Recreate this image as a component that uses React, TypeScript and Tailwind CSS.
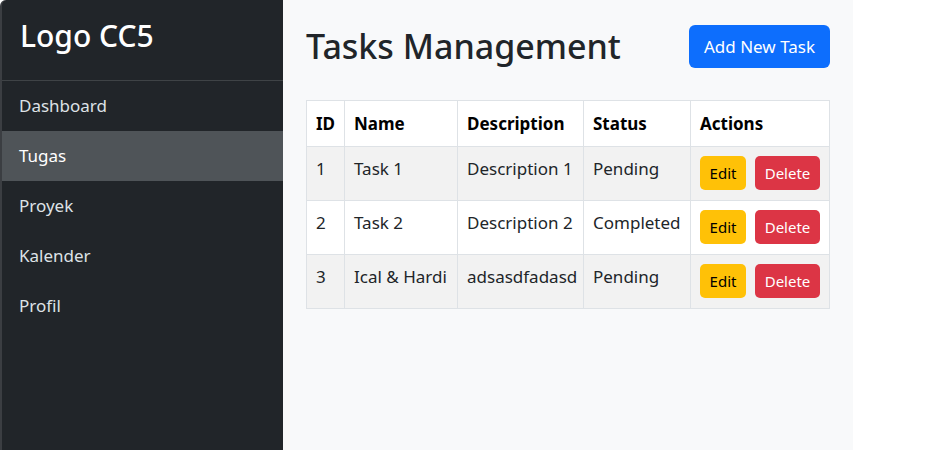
import React from 'react'

const tasks = [
  { id: 1, name: 'Task 1', description: 'Description 1', status: 'Pending' },
  { id: 2, name: 'Task 2', description: 'Description 2', status: 'Completed' },
  { id: 3, name: 'Ical & Hardi', description: 'adsasdfadasd', status: 'Pending' },
]

const menu = ['Dashboard', 'Tugas', 'Proyek', 'Kalender', 'Profil']

export default function App() {
  return (
    <div
      className="flex h-[450px] w-[952px] bg-white"
      style={{ fontFamily: '"Noto Sans", "Open Sans", sans-serif' }}
    >
      <aside className="w-[283px] shrink-0 bg-[#212529] border-l-2 border-[#3b3e42] rounded-tl-md">
        <div className="h-[81px] border-b border-[#3f4346] px-[18px] pt-[18px]">
          <h1 className="text-[30px] font-medium text-white leading-[1.2]">Logo CC5</h1>
        </div>
        <nav className="flex flex-col">
          {menu.map((item) => (
            <a
              key={item}
              href="#"
              className={`h-[50px] flex items-center px-[17px] text-[17px] ${
                item === 'Tugas' ? 'bg-[#4f5458] text-white' : 'text-[#dee2e6]'
              }`}
            >
              {item}
            </a>
          ))}
        </nav>
      </aside>

      <main className="w-[570px] shrink-0 bg-[#f8f9fa] px-[23px] pt-[25px]">
        <div className="flex items-center justify-between mb-[32px]">
          <h2 className="text-[34px] font-medium text-[#212529] leading-[1.2]">Tasks Management</h2>
          <button className="bg-[#0d6efd] text-white text-[17px] h-[43px] px-[15px] rounded-md">
            Add New Task
          </button>
        </div>

        <table className="w-[524px] table-fixed border-collapse text-[17px] text-[#212529]">
          <colgroup>
            <col className="w-[38px]" />
            <col className="w-[113px]" />
            <col className="w-[126px]" />
            <col className="w-[107px]" />
            <col />
          </colgroup>
          <thead>
            <tr className="bg-white h-[46px]">
              <th className="border border-[#dee2e6] pl-[9px] text-left font-bold text-black">ID</th>
              <th className="border border-[#dee2e6] pl-[9px] text-left font-bold text-black">Name</th>
              <th className="border border-[#dee2e6] pl-[9px] text-left font-bold text-black">Description</th>
              <th className="border border-[#dee2e6] pl-[9px] text-left font-bold text-black">Status</th>
              <th className="border border-[#dee2e6] pl-[9px] text-left font-bold text-black">Actions</th>
            </tr>
          </thead>
          <tbody>
            {tasks.map((t, i) => (
              <tr key={t.id} className={`${i % 2 === 0 ? 'bg-[#f2f2f2]' : 'bg-white'} h-[54px]`}>
                <td className="border border-[#dee2e6] pl-[9px] pb-[9px]">{t.id}</td>
                <td className="border border-[#dee2e6] pl-[9px] pb-[9px] whitespace-nowrap">{t.name}</td>
                <td className="border border-[#dee2e6] pl-[9px] pb-[9px] whitespace-nowrap">{t.description}</td>
                <td className="border border-[#dee2e6] pl-[9px] pb-[9px] whitespace-nowrap">{t.status}</td>
                <td className="border border-[#dee2e6] pl-[9px] pb-[1px]">
                  <div className="flex gap-[9px]">
                    <button className="bg-[#ffc107] text-black text-[15px] h-[34px] w-[46px] rounded-[5px]">Edit</button>
                    <button className="bg-[#dc3545] text-white text-[15px] h-[34px] w-[65px] rounded-[5px]">Delete</button>
                  </div>
                </td>
              </tr>
            ))}
          </tbody>
        </table>
      </main>

      <div className="flex-1 bg-white" />
    </div>
  )
}
